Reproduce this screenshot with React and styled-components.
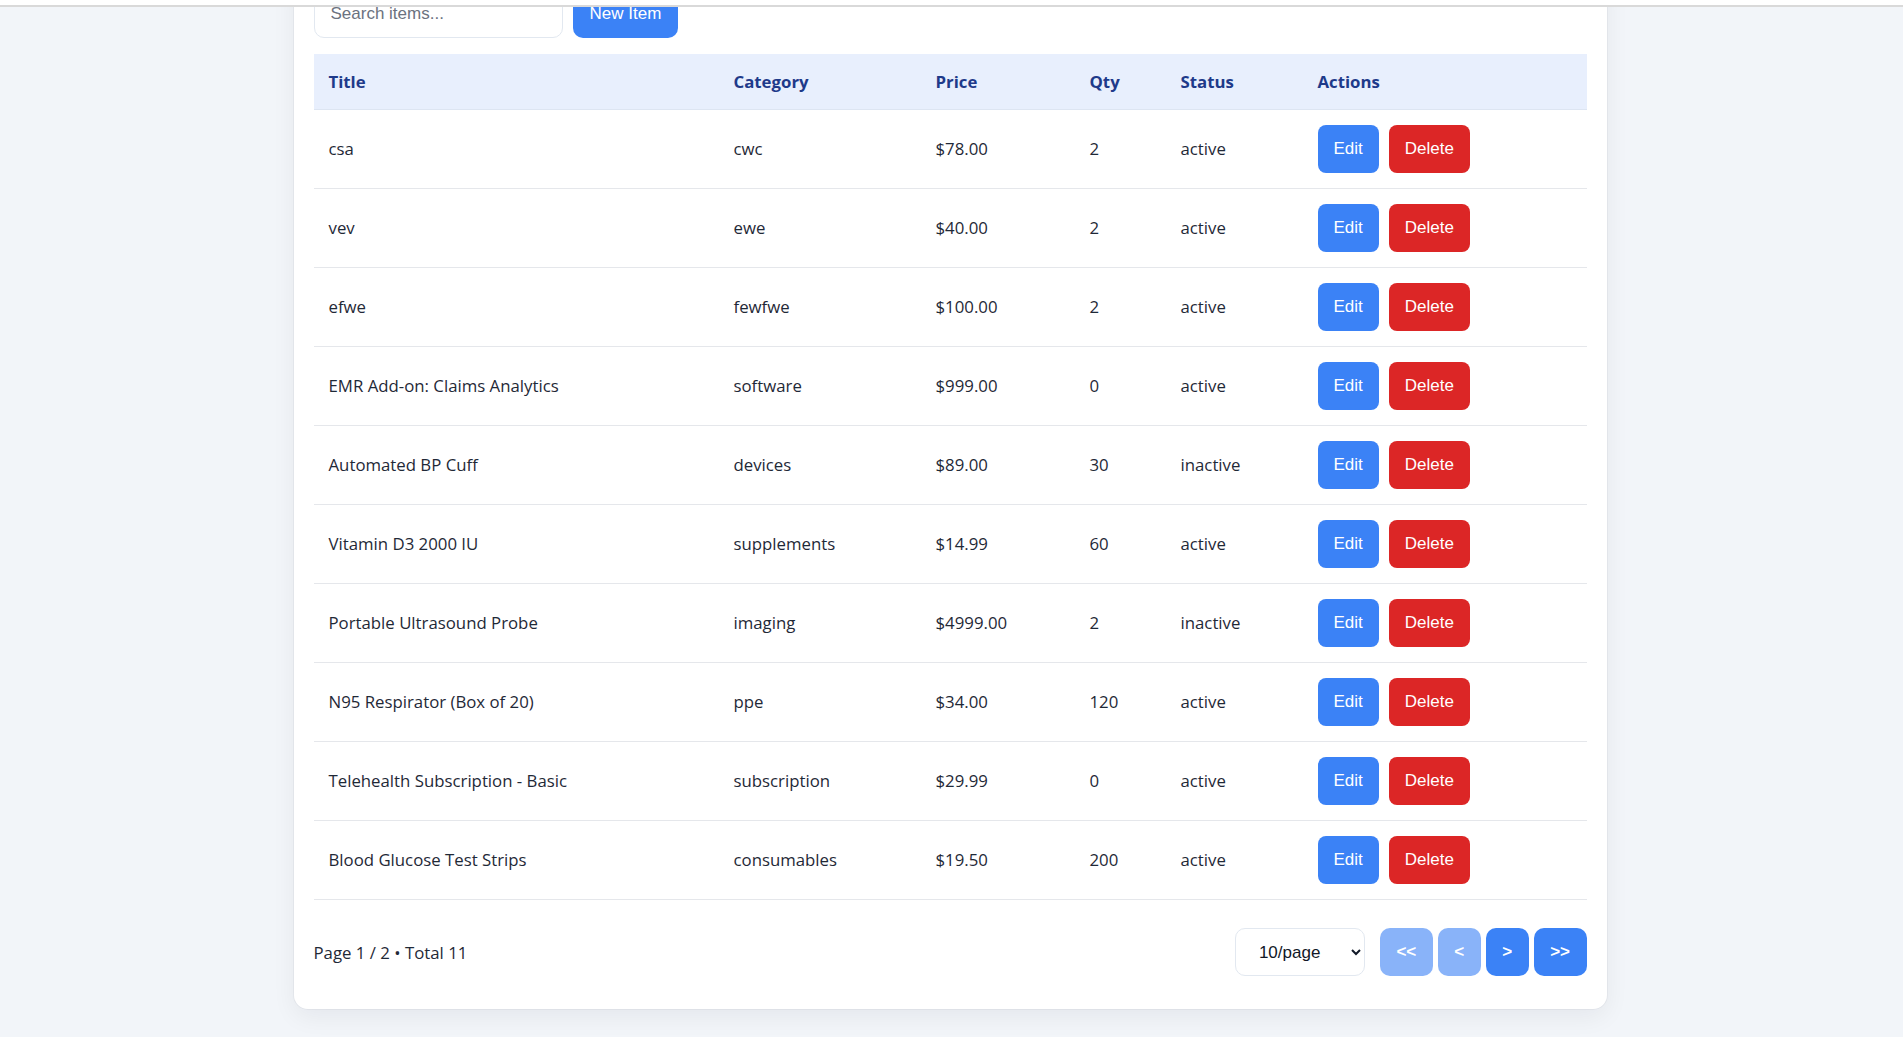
import React from 'react';
import styled, { createGlobalStyle } from 'styled-components';

const items = [
  { title: 'csa', category: 'cwc', price: 78, qty: 2, status: 'active' },
  { title: 'vev', category: 'ewe', price: 40, qty: 2, status: 'active' },
  { title: 'efwe', category: 'fewfwe', price: 100, qty: 2, status: 'active' },
  { title: 'EMR Add-on: Claims Analytics', category: 'software', price: 999, qty: 0, status: 'active' },
  { title: 'Automated BP Cuff', category: 'devices', price: 89, qty: 30, status: 'inactive' },
  { title: 'Vitamin D3 2000 IU', category: 'supplements', price: 14.99, qty: 60, status: 'active' },
  { title: 'Portable Ultrasound Probe', category: 'imaging', price: 4999, qty: 2, status: 'inactive' },
  { title: 'N95 Respirator (Box of 20)', category: 'ppe', price: 34, qty: 120, status: 'active' },
  { title: 'Telehealth Subscription - Basic', category: 'subscription', price: 29.99, qty: 0, status: 'active' },
  { title: 'Blood Glucose Test Strips', category: 'consumables', price: 19.5, qty: 200, status: 'active' },
];

const columns = [
  { label: 'Title', width: 405 },
  { label: 'Category', width: 202 },
  { label: 'Price', width: 154 },
  { label: 'Qty', width: 91 },
  { label: 'Status', width: 137 },
  { label: 'Actions', width: 284 },
];

const GlobalStyle = createGlobalStyle`
  * {
    box-sizing: border-box;
  }

  body {
    margin: 0;
    background: #f2f5f9;
    font-family: 'Open Sans', 'Noto Sans', sans-serif;
    color: #1f2937;
    overflow: hidden;
  }
`;

const App = () => {
  return (
    <>
      <GlobalStyle />
      <TopEdge />
      <Page>
        <Card>
          <Toolbar>
            <SearchInput placeholder='Search items...' />
            <PrimaryButton>New Item</PrimaryButton>
          </Toolbar>
          <Table>
            <colgroup>
              {columns.map((c) => (
                <col key={c.label} style={{ width: c.width }} />
              ))}
            </colgroup>
            <thead>
              <tr>
                {columns.map((c) => (
                  <Th key={c.label}>{c.label}</Th>
                ))}
              </tr>
            </thead>
            <tbody>
              {items.map((item) => (
                <Row key={item.title}>
                  <Td>{item.title}</Td>
                  <Td>{item.category}</Td>
                  <Td>${item.price.toFixed(2)}</Td>
                  <Td>{item.qty}</Td>
                  <Td>{item.status}</Td>
                  <Td>
                    <Actions>
                      <ActionButton>Edit</ActionButton>
                      <ActionButton danger>Delete</ActionButton>
                    </Actions>
                  </Td>
                </Row>
              ))}
            </tbody>
          </Table>
          <Footer>
            <PageInfo>Page 1 / 2 • Total 11</PageInfo>
            <Pager>
              <PageSelect defaultValue='10'>
                <option value='10'>10/page</option>
                <option value='20'>20/page</option>
                <option value='50'>50/page</option>
              </PageSelect>
              <PagerButtons>
                <PagerButton disabled>&lt;&lt;</PagerButton>
                <PagerButton disabled>&lt;</PagerButton>
                <PagerButton>&gt;</PagerButton>
                <PagerButton>&gt;&gt;</PagerButton>
              </PagerButtons>
            </Pager>
          </Footer>
        </Card>
      </Page>
    </>
  );
};

// thin strip of the browser chrome left at the top of the capture
const TopEdge = styled.div`
  position: fixed;
  top: 0;
  left: 0;
  right: 0;
  height: 7px;
  background: #fff;
  border-bottom: 2px solid #d9d9d9;
  z-index: 10;
`;

const Page = styled.div`
  padding: 0 3px 29px 0;
`;

const Card = styled.div`
  width: 1313px;
  margin: -30px auto 0;
  padding: 20px 20px 33px;
  background: #fff;
  border-radius: 14px;
  box-shadow: 0 0 0 1px rgba(15, 23, 42, 0.04), 0 8px 24px rgba(15, 23, 42, 0.06);
`;

const Toolbar = styled.div`
  display: flex;
  gap: 10px;
  margin-bottom: 16px;
`;

const SearchInput = styled.input`
  width: 249px;
  height: 48px;
  padding: 0 16px;
  border: 1px solid #e2e8f0;
  border-radius: 10px;
  font-family: 'Liberation Sans', Arial, sans-serif;
  font-size: 17px;
  color: #111827;
  outline: none;

  &::placeholder {
    color: #6b7280;
  }
`;

const PrimaryButton = styled.button`
  height: 48px;
  padding: 0 17px;
  border: none;
  border-radius: 10px;
  background: #3b82f6;
  color: #fff;
  font-family: 'Liberation Sans', Arial, sans-serif;
  font-size: 17px;
`;

const Table = styled.table`
  width: 100%;
  border-collapse: collapse;
  table-layout: fixed;
`;

const Th = styled.th`
  padding: 16px 15px 15px;
  background: #e8effd;
  border-bottom: 1px solid #dde5f2;
  color: #1e3a8a;
  font-size: 16.8px;
  font-weight: 700;
  line-height: 24px;
  text-align: left;
`;

const Row = styled.tr`
  border-bottom: 1px solid #e5e7eb;
`;

const Td = styled.td`
  padding: 15px;
  font-size: 16.8px;
  line-height: 24px;
  vertical-align: middle;
  white-space: nowrap;
`;

const Actions = styled.div`
  display: flex;
  gap: 10px;
`;

const ActionButton = styled.button`
  height: 48px;
  padding: 0 16px;
  border: none;
  border-radius: 8px;
  background: ${(p) => (p.danger ? '#dc2626' : '#3b82f6')};
  color: #fff;
  font-family: 'Liberation Sans', Arial, sans-serif;
  font-size: 17px;
`;

const Footer = styled.div`
  display: flex;
  align-items: center;
  justify-content: space-between;
  margin-top: 28px;
`;

const PageInfo = styled.span`
  font-size: 16.8px;
  color: #1f2937;
`;

const Pager = styled.div`
  display: flex;
  align-items: center;
  gap: 15px;
`;

const PageSelect = styled.select`
  width: 130px;
  height: 48px;
  padding: 0 10px 0 19px;
  border: 1px solid #e2e8f0;
  border-radius: 10px;
  background: #fff;
  color: #111827;
  font-family: 'Liberation Sans', Arial, sans-serif;
  font-size: 17px;
`;

const PagerButtons = styled.div`
  display: flex;
  gap: 5px;
`;

const PagerButton = styled.button`
  height: 48px;
  padding: 0 16.5px;
  border: none;
  border-radius: 10px;
  background: #3b82f6;
  color: #fff;
  font-family: 'Liberation Sans', Arial, sans-serif;
  font-size: 17px;
  font-weight: 700;

  &:disabled {
    opacity: 0.6;
  }
`;

export default App;
